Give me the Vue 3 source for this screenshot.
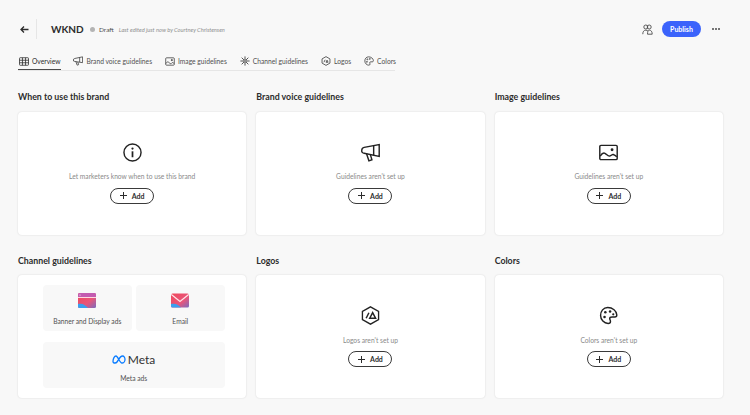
<script setup>
const add = "Add";
</script>

<template>
  <div class="page">
    <header class="top">
      <div class="back">
        <svg width="9" height="9" viewBox="0 0 9 9" fill="none" stroke="#2c2c2c" stroke-width="1.300">
          <path d="M8.500 4.500H1.500M4 1.500 1 4.500l3 3" />
        </svg>
      </div>
      <span class="brand">WKND</span>
      <span class="dot"></span>
      <span class="draft">Draft</span>
      <span class="edited">Last edited just now by Courtney Christensen</span>
      <div class="actions">
        <svg width="11" height="11" viewBox="0 0 11 11" fill="none" stroke="#4b4b4b" stroke-width=".9">
          <circle cx="3.800" cy="3" r="2" />
          <circle cx="7.200" cy="3" r="2" />
          <path d="M.8 10.200c0-2.600 1-4 3-4 1 0 1.700.3 2.200 1M5.500 10.200c0-2.600.7-4 1.900-4 1.700 0 2.800 1.400 2.800 4z" />
        </svg>
        <button class="publish">Publish</button>
        <div class="more"><i></i><i></i><i></i></div>
      </div>
    </header>

    <nav class="tabs">
      <div class="tab active">
        <svg width="10" height="9" viewBox="0 0 11 10" fill="none" stroke="#333" stroke-width=".9">
          <rect x=".5" y=".8" width="10" height="8.400" rx=".8" />
          <path d="M.5 3.600h10M.5 6.400h10M3.800.8v8.400M7.200.8v8.400" />
        </svg>
        Overview
      </div>
      <div class="tab">
        <svg width="10" height="10" viewBox="0 0 24 24" fill="none" stroke="#444" stroke-width="2">
          <path d="M4 6 23 2v14L4 13a3 3 0 0 1-3-3.500A3.500 3.500 0 0 1 4 6zM7 13.500 10 22l3.500-1.200-2-6.300M16 3.500v11" />
        </svg>
        Brand voice guidelines
      </div>
      <div class="tab">
        <svg width="10" height="9" viewBox="0 0 24 22" fill="none" stroke="#444" stroke-width="2">
          <rect x="1.500" y="2" width="21" height="18" rx="2" />
          <circle cx="16.500" cy="7.500" r="1.500" fill="#444" />
          <path d="M2 16c3-5 5-5 8-2s5 3 6 1 3-2 6 1" />
        </svg>
        Image guidelines
      </div>
      <div class="tab">
        <svg width="10" height="10" viewBox="0 0 24 24" fill="none" stroke="#444" stroke-width="2.200">
          <circle cx="12" cy="12" r="3" />
          <path d="M12 1v7M12 16v7M1 12h7M16 12h7M4 4l5.500 5.500M14.500 14.500 20 20M20 4l-5.500 5.500M9.500 14.500 4 20" />
        </svg>
        Channel guidelines
      </div>
      <div class="tab">
        <svg width="10" height="10" viewBox="0 0 24 24" fill="none" stroke="#444" stroke-width="2">
          <path d="M12 1.500 21.500 7v10L12 22.500 2.500 17V7z" />
          <path d="M7 15l3-6M12 15l2.500-5 2.500 5z" />
        </svg>
        Logos
      </div>
      <div class="tab">
        <svg width="10" height="10" viewBox="0 0 24 24" fill="none" stroke="#444" stroke-width="2">
          <path d="M11 2C5.500 2 2 6.500 2 12s4.500 10 9.500 10c2 0 3-1 3-2.500S13.500 17 13.500 16s1-2 3-2h3.500c1.500 0 2.500-1 2.500-2.500C22.500 6 17 2 11 2z" />
          <circle cx="8" cy="8" r="1.200" />
          <circle cx="14" cy="7" r="1.200" />
          <circle cx="7" cy="14" r="1.200" />
        </svg>
        Colors
      </div>
    </nav>

    <main class="grid">
      <section>
        <h2>When to use this brand</h2>
        <div class="card">
          <svg class="icon" viewBox="0 0 24 24" fill="none" stroke="#222" stroke-width="1.800">
            <circle cx="12" cy="12" r="10.800" />
            <circle cx="12" cy="7" r="1.400" fill="#222" stroke="none" />
            <path d="M12 10.500V18" stroke-width="2.200" />
          </svg>
          <p>Let marketers know when to use this brand</p>
          <button class="add"><span class="plus"></span>{{ add }}</button>
        </div>
      </section>
      <section>
        <h2>Brand voice guidelines</h2>
        <div class="card">
          <svg class="icon" viewBox="0 0 24 24" fill="none" stroke="#222" stroke-width="1.800">
            <path d="M4 5.500 23 2v15L4 13a3 3 0 0 1-3-3.700A3.800 3.800 0 0 1 4 5.500z" />
            <path d="M16 3.500v12M7 13.700 10 22.500l3.800-1.300-2-6.500" />
          </svg>
          <p>Guidelines aren't set up</p>
          <button class="add"><span class="plus"></span>{{ add }}</button>
        </div>
      </section>
      <section>
        <h2>Image guidelines</h2>
        <div class="card">
          <svg class="icon" viewBox="0 0 24 24" fill="none" stroke="#222" stroke-width="1.800">
            <rect x="1" y="3" width="22" height="18" rx="1.500" />
            <circle cx="16.500" cy="8.500" r="1.800" fill="#222" stroke="none" />
            <path d="M1.500 16.500c2-3 4-4.500 6-3.500s3.500 4 6 3.500 3-2.500 4.500-2 3 1.500 4.500 3" />
          </svg>
          <p>Guidelines aren't set up</p>
          <button class="add"><span class="plus"></span>{{ add }}</button>
        </div>
      </section>
      <section>
        <h2>Channel guidelines</h2>
        <div class="card channels">
          <div class="tile">
            <svg width="18" height="15" viewBox="0 0 18 15">
              <defs>
                <linearGradient id="grad" x1="0" y1="0" x2="1" y2="1">
                  <stop offset="0" stop-color="#f0475a" />
                  <stop offset=".6" stop-color="#e8567a" />
                  <stop offset="1" stop-color="#7a6cc0" />
                </linearGradient>
              </defs>
              <rect width="18" height="15" rx="1.500" fill="url(#grad)" />
              <path d="M0 11c5-1 7 1 10 4H1.500A1.500 1.500 0 0 1 0 13.500z" fill="#3aa0f0" />
              <path d="M0 1.500A1.500 1.500 0 0 1 1.500 0h15A1.500 1.500 0 0 1 18 1.500V4H0z" fill="#c35cb0" />
              <rect y="4" width="18" height="1" fill="#ffd9e0" />
              <circle cx="2" cy="2" r=".6" fill="#fff" />
            </svg>
            <span>Banner and Display ads</span>
          </div>
          <div class="tile">
            <svg width="18" height="15" viewBox="0 0 18 15">
              <rect width="18" height="14" y=".5" rx="1.500" fill="url(#grad)" />
              <path d="M0 11c5-1 7 1 10 3.500H1.500A1.500 1.500 0 0 1 0 13z" fill="#3aa0f0" />
              <path d="M.3 1.500 9 8.500l8.700-7" fill="none" stroke="#ffe6ea" stroke-width="1.300" />
            </svg>
            <span>Email</span>
          </div>
          <div class="tile wide">
            <div class="meta">
              <svg width="14" height="9" viewBox="0 0 28 18" fill="none" stroke="#0a7cff" stroke-width="2.600">
                <path d="M2 13c0-6 3-11 6-11 4 0 7 14 12 14 3 0 6-3 6-7s-2-7-5-7c-5 0-8 8-11 12-1.500 2-2.500 2-4 2-2.500 0-4-1-4-3z" />
              </svg>
              <span>Meta</span>
            </div>
            <span>Meta ads</span>
          </div>
        </div>
      </section>
      <section>
        <h2>Logos</h2>
        <div class="card">
          <svg class="icon" viewBox="0 0 24 24" fill="none" stroke="#222" stroke-width="1.700">
            <path d="M12 1 22.200 6.800v10.400L12 23 1.800 17.200V6.800z" />
            <path d="M6.500 15.500l3.500-7" stroke-width="1.900" />
            <path d="M11 15.500l3.700-7 3.700 7z" stroke-width="1.900" />
          </svg>
          <p>Logos aren't set up</p>
          <button class="add"><span class="plus"></span>{{ add }}</button>
        </div>
      </section>
      <section>
        <h2>Colors</h2>
        <div class="card">
          <svg class="icon" viewBox="0 0 24 24" fill="none" stroke="#222" stroke-width="1.800">
            <path d="M11 2C5.500 2 2 6.500 2 12s4.500 10 9.500 10c2 0 3-1 3-2.500S13.500 17 13.500 16s1-2 3-2h3.500c1.500 0 2.500-1 2.500-2.500C22.500 6 17 2 11 2z" />
            <circle cx="8" cy="8" r="1.600" fill="#222" stroke="none" />
            <circle cx="14" cy="7" r="1.600" fill="#222" stroke="none" />
            <circle cx="7" cy="14" r="1.600" fill="#222" stroke="none" />
            <circle cx="18" cy="10.500" r="1.400" fill="#222" stroke="none" />
          </svg>
          <p>Colors aren't set up</p>
          <button class="add"><span class="plus"></span>{{ add }}</button>
        </div>
      </section>
    </main>
  </div>
</template>

<style>
html,
body {
  margin: 0;
  background: #f8f8f8;
}
</style>

<style scoped>
.page {
  width: 750px;
  height: 415px;
  overflow: hidden;
  background: #f8f8f8;
  font-family: Lato, "Noto Sans", sans-serif;
  color: #2c2c2c;
}

.top {
  display: flex;
  align-items: center;
  height: 20px;
  padding: 19px 30px 0 20px;
}

.back {
  display: flex;
  align-items: center;
  width: 17px;
  height: 20px;
  box-sizing: border-box;
  border-right: 1px solid #e6e6e6;
  margin-right: 14px;
}

.brand {
  width: 39px;
  font-size: 10px;
  font-weight: 700;
}

.dot {
  width: 5px;
  height: 5px;
  border-radius: 50%;
  background: #b4b4b4;
  margin-right: 4px;
}

.draft {
  font-size: 6.500px;
  color: #4b4b4b;
  margin-right: 5px;
}

.edited {
  font-size: 5.700px;
  font-style: italic;
  color: #8f8f8f;
}

.actions {
  margin-left: auto;
  display: flex;
  align-items: center;
}

.publish {
  width: 39px;
  height: 16px;
  margin: 0 11px 0 9px;
  padding: 0;
  border: 0;
  border-radius: 8px;
  background: #3b63fb;
  color: #fff;
  font: 700 7px Lato, sans-serif;
}

.more {
  display: flex;
  gap: 1px;
  width: 8px;
}

.more i {
  width: 2px;
  height: 2px;
  border-radius: 50%;
  background: #4b4b4b;
}

.tabs {
  display: flex;
  gap: 11px;
  width: 377px;
  height: 17px;
  margin: 14px 0 0 18px;
  border-bottom: 1px solid #e6e6e6;
}

.tab {
  display: flex;
  align-items: center;
  gap: 3px;
  height: 16px;
  padding: 0 1px;
  font-size: 6.700px;
  white-space: nowrap;
  color: #505050;
}

.tab.active {
  color: #2c2c2c;
  box-shadow: 0 1px 0 #4b4b4b;
}

.grid {
  display: grid;
  grid-template-columns: repeat(3, 1fr);
  gap: 19px 10px;
  padding: 19px 27px 0 18px;
}

h2 {
  margin: 0 0 8.500px;
  font-size: 8.800px;
  line-height: 13px;
  font-weight: 700;
  color: #2c2c2c;
}

.card {
  display: flex;
  flex-direction: column;
  align-items: center;
  height: 123px;
  padding-top: 31px;
  box-sizing: border-box;
  background: #fff;
  border-radius: 4px;
  box-shadow: 0 0 2px rgba(0, 0, 0, 0.14);
}

.icon {
  width: 19px;
  height: 19px;
}

p {
  margin: 9.500px 0 6.500px;
  font-size: 6.700px;
  line-height: 10px;
  color: #8a8a8a;
}

.add {
  display: flex;
  align-items: center;
  justify-content: center;
  gap: 5px;
  width: 44px;
  height: 16px;
  padding: 0;
  background: #fff;
  border: 1.200px solid #3a3a3a;
  border-radius: 8px;
  font: 700 7px Lato, sans-serif;
  color: #2c2c2c;
}

.plus {
  width: 7px;
  height: 7px;
  background: linear-gradient(#2c2c2c, #2c2c2c) center / 100% 1px no-repeat,
    linear-gradient(#2c2c2c, #2c2c2c) center / 1px 100% no-repeat;
}

.channels {
  display: grid;
  grid-template-columns: 88.500px 88.500px;
  grid-template-rows: 45.700px 45.700px;
  gap: 11.300px 4.500px;
  justify-content: start;
  align-content: start;
  align-items: stretch;
  padding: 10px 0 0 25px;
}

.tile {
  display: flex;
  flex-direction: column;
  align-items: center;
  justify-content: space-between;
  padding: 8px 0 4.500px;
  box-sizing: border-box;
  background: #f8f8f8;
  border-radius: 4px;
  font-size: 6.700px;
  line-height: 9px;
  color: #505050;
}

.wide {
  grid-column: 1 / 3;
  padding-top: 10.500px;
}

.meta {
  display: flex;
  align-items: center;
  gap: 1.500px;
  height: 15px;
  font-size: 12px;
  color: #333;
}
</style>
